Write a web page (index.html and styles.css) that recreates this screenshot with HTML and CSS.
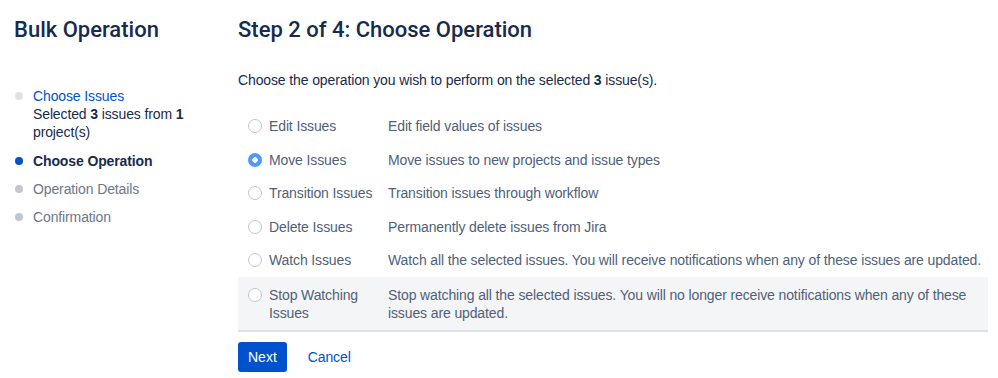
FILE: index.html
```html
<!DOCTYPE html>
<html lang="en">
<head>
    <meta charset="UTF-8">
    <title>Bulk Operation</title>
    <link rel="stylesheet" href="styles.css">
</head>
<body>
    <div class="page">
        <aside class="sidebar">
            <h2 class="page-title">Bulk Operation</h2>
            <ol class="steps">
                <li class="step done">
                    <a href="#" class="step-link">Choose Issues</a>
                    <div class="step-note">Selected <b>3</b> issues from <b>1</b> project(s)</div>
                </li>
                <li class="step current">Choose Operation</li>
                <li class="step">Operation Details</li>
                <li class="step">Confirmation</li>
            </ol>
        </aside>

        <main class="content">
            <h2 class="page-title">Step 2 of 4: Choose Operation</h2>
            <p class="intro">Choose the operation you wish to perform on the selected <b>3</b> issue(s).</p>

            <table class="ops">
                <tr>
                    <td class="op-radio"><span class="radio"></span></td>
                    <td class="op-name">Edit Issues</td>
                    <td class="op-desc">Edit field values of issues</td>
                </tr>
                <tr>
                    <td class="op-radio"><span class="radio checked"></span></td>
                    <td class="op-name">Move Issues</td>
                    <td class="op-desc">Move issues to new projects and issue types</td>
                </tr>
                <tr>
                    <td class="op-radio"><span class="radio"></span></td>
                    <td class="op-name">Transition Issues</td>
                    <td class="op-desc">Transition issues through workflow</td>
                </tr>
                <tr>
                    <td class="op-radio"><span class="radio"></span></td>
                    <td class="op-name">Delete Issues</td>
                    <td class="op-desc">Permanently delete issues from Jira</td>
                </tr>
                <tr>
                    <td class="op-radio"><span class="radio"></span></td>
                    <td class="op-name">Watch Issues</td>
                    <td class="op-desc">Watch all the selected issues. You will receive notifications when any of these issues are updated.</td>
                </tr>
                <tr class="hover">
                    <td class="op-radio"><span class="radio"></span></td>
                    <td class="op-name">Stop Watching Issues</td>
                    <td class="op-desc">Stop watching all the selected issues. You will no longer receive notifications when any of these issues are updated.</td>
                </tr>
            </table>

            <div class="actions">
                <button class="btn-primary">Next</button>
                <a href="#" class="btn-link">Cancel</a>
            </div>
        </main>
    </div>
</body>
</html>
```

FILE: styles.css
```css
* {
    margin: 0;
    padding: 0;
    box-sizing: border-box;
}

body {
    font-family: 'Liberation Sans', Arial, sans-serif;
    font-size: 14px;
    line-height: 18px;
    letter-spacing: -0.12px;
    color: #172b4d;
    background: #ffffff;
}

.page {
    display: flex;
    padding: 17px 10px 0 14px;
}

.sidebar {
    width: 224px;
    flex-shrink: 0;
}

.content {
    flex: 1;
}

.page-title {
    font-family: Roboto, 'Liberation Sans', sans-serif;
    font-size: 22px;
    font-weight: 500;
    line-height: 26px;
    color: #172b4d;
    letter-spacing: 0;
}

/* steps */
.steps {
    list-style: none;
    margin-top: 44px;
}

.step {
    position: relative;
    padding-left: 19px;
    margin-bottom: 10px;
    color: #6b778c;
}

.step::before {
    content: '';
    position: absolute;
    left: 1px;
    top: 5px;
    width: 8px;
    height: 8px;
    border-radius: 50%;
    background: #c1c7d0;
}

.step.done {
    margin-bottom: 11px;
}

.step.done::before {
    background: #dfe1e6;
}

.step.current {
    color: #172b4d;
    font-weight: bold;
}

.step.current::before {
    background: #0052cc;
}

.step-link {
    color: #0052cc;
    text-decoration: none;
}

.step-note {
    color: #172b4d;
    width: 170px;
}

/* operations */
.intro {
    margin-top: 28px;
    margin-bottom: 20px;
}

.ops {
    width: 100%;
    border-collapse: collapse;
    color: #505f79;
}

.ops td {
    vertical-align: top;
    padding: 8px 0 7.5px;
}

.ops tr.hover td {
    background: #f4f5f7;
    border-bottom: 2px solid #dfe1e6;
    padding-top: 9px;
    padding-bottom: 8px;
}

.op-radio {
    width: 31px;
    padding-left: 10px !important;
}

.radio {
    display: block;
    width: 14px;
    height: 14px;
    margin-top: 2px;
    border-radius: 50%;
    border: 1px solid #c1c7d0;
    background: #ffffff;
}

.radio.checked {
    border: none;
    background: radial-gradient(circle, #ffffff 0 2.5px, #4c9aff 3px);
}

.op-name {
    width: 119px;
    padding-right: 8px !important;
}

.actions {
    display: flex;
    align-items: center;
    gap: 21px;
    margin-top: 10px;
}

.btn-primary {
    height: 30px;
    padding: 0 10px;
    border: none;
    border-radius: 3px;
    background: #0052cc;
    color: #ffffff;
    font: inherit;
}

.btn-link {
    color: #0052cc;
    text-decoration: none;
}
```
